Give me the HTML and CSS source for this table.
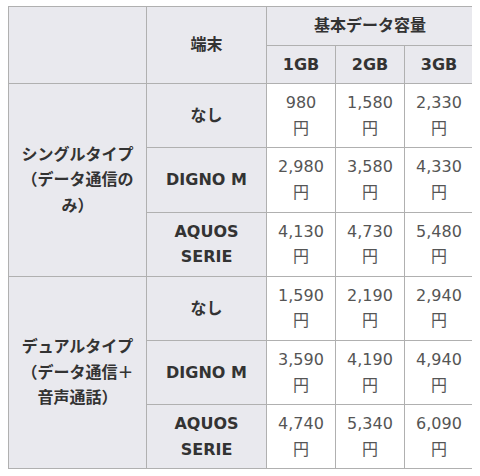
FILE: index.html
```html
<!DOCTYPE html>
<html lang="ja">
<head>
<meta charset="utf-8">
<title>料金表</title>
<link rel="stylesheet" href="styles.css">
</head>
<body>
<table class="price">
  <colgroup>
    <col class="c-type">
    <col class="c-dev">
    <col class="c-gb">
    <col class="c-gb">
    <col class="c-gb">
  </colgroup>
  <thead>
    <tr>
      <th rowspan="2"></th>
      <th rowspan="2">端末</th>
      <th colspan="3">基本データ容量</th>
    </tr>
    <tr>
      <th>1GB</th>
      <th>2GB</th>
      <th>3GB</th>
    </tr>
  </thead>
  <tbody>
    <tr>
      <th rowspan="3">シングルタイプ（データ通信のみ）</th>
      <th>なし</th>
      <td>980<br>円</td>
      <td>1,580<br>円</td>
      <td>2,330<br>円</td>
    </tr>
    <tr>
      <th>DIGNO M</th>
      <td>2,980<br>円</td>
      <td>3,580<br>円</td>
      <td>4,330<br>円</td>
    </tr>
    <tr>
      <th>AQUOS<br>SERIE</th>
      <td>4,130<br>円</td>
      <td>4,730<br>円</td>
      <td>5,480<br>円</td>
    </tr>
    <tr>
      <th rowspan="3">デュアルタイプ（データ通信＋音声通話）</th>
      <th>なし</th>
      <td>1,590<br>円</td>
      <td>2,190<br>円</td>
      <td>2,940<br>円</td>
    </tr>
    <tr>
      <th>DIGNO M</th>
      <td>3,590<br>円</td>
      <td>4,190<br>円</td>
      <td>4,940<br>円</td>
    </tr>
    <tr>
      <th>AQUOS<br>SERIE</th>
      <td>4,740<br>円</td>
      <td>5,340<br>円</td>
      <td>6,090<br>円</td>
    </tr>
  </tbody>
</table>
</body>
</html>
```
FILE: styles.css
```css
html, body {
  background: #ffffff;
}
body {
  margin: 6px 8px;
  font-family: "DejaVu Sans", "Noto Sans CJK JP", sans-serif;
  font-size: 16px;
  line-height: 25.6px;
}
.price {
  width: 464px;
  border-collapse: collapse;
  table-layout: fixed;
  border: 1px solid #b4b4b4;
}
.c-type { width: 138px; }
.c-dev { width: 120px; }
.c-gb { width: 69px; }
.price th,
.price td {
  border: 1px solid #b0b0b0;
  padding: 6px 8px;
  text-align: center;
  vertical-align: middle;
}
.price th {
  background: #e9e9ee;
  color: #333333;
  font-weight: bold;
}
.price td {
  background: #ffffff;
  color: #555555;
  font-weight: normal;
}
```
